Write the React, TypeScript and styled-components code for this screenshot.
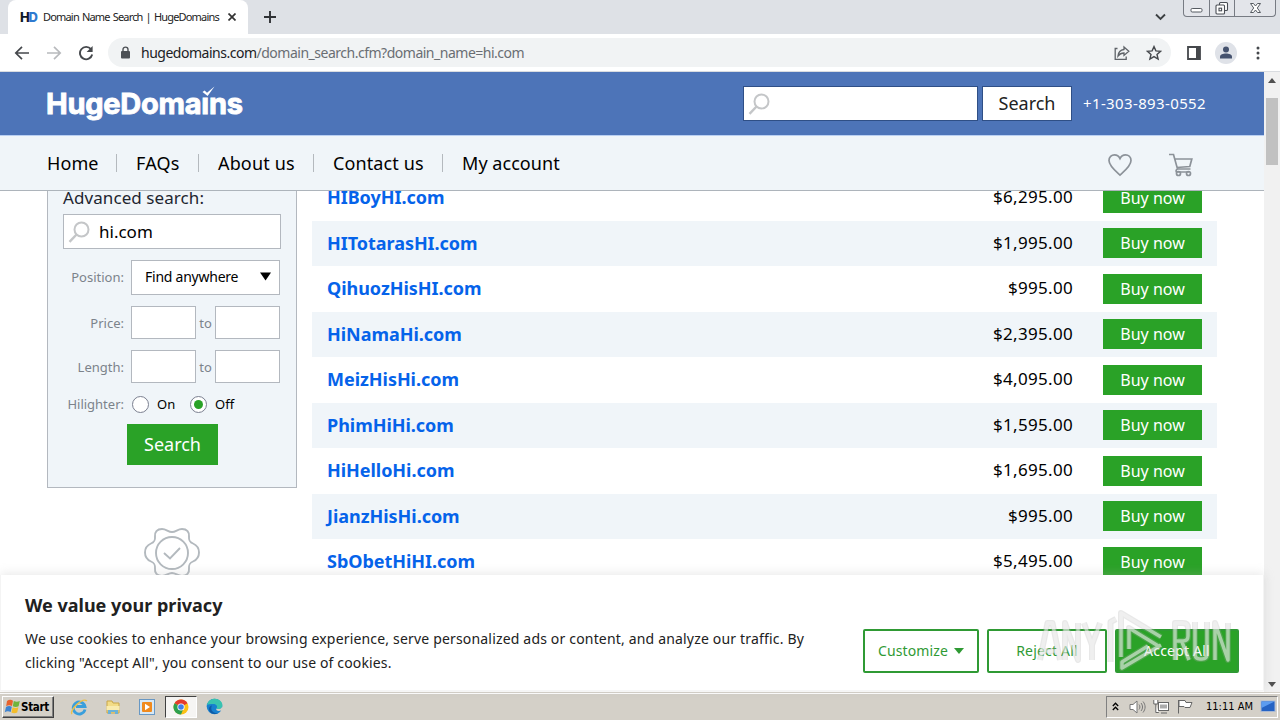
import React from "react";
import styled, { createGlobalStyle } from "styled-components";

const Global = createGlobalStyle`
  * { box-sizing: border-box; }
  body { margin: 0; overflow: hidden; font-family: "Noto Sans", "Open Sans", sans-serif; color: #000; }
  button, input { font-family: inherit; }
`;

const Screen = styled.div`
  width: 1280px; height: 720px; display: flex; flex-direction: column;
  overflow: hidden; background: #fff; position: relative;
`;

const Label = styled.span<{ $size: number; $track?: number; $color?: string; $weight?: number }>`
  font-size: ${p => p.$size}px;
  letter-spacing: ${p => p.$track ?? 0}px;
  color: ${p => p.$color ?? "inherit"};
  font-weight: ${p => p.$weight ?? 400};
  white-space: nowrap;
`;

/* Browser chrome */
const TabStrip = styled.div`
  height: 34px; background: #dee1e6; display: flex; align-items: flex-start; flex: none;
`;
const Tab = styled.div`
  margin-left: 8px; width: 240px; height: 34px; background: #fff; border-radius: 8px 8px 0 0;
  display: flex; align-items: center; padding: 0 12px 0 12px; flex: none;
`;
const Favicon = styled.span`
  width: 23px; font: 800 13px/14px "Inter", sans-serif; letter-spacing: -1.2px; color: #10182a;
  b { color: #2f7ad0; font-weight: 800; }
`;
const TabTitle = styled.div`flex: 1; min-width: 0; line-height: 16px; display: flex; word-spacing: 1px;`;
const NewTab = styled.div`width: 12px; margin: 11px 0 0 16px; height: 12px; display: flex;`;
const StripEnd = styled.div`margin-left: auto; display: flex; align-items: flex-start;`;
const Chevron = styled.div`margin: 13px 17px 0 0; display: flex;`;
const WindowButtons = styled.div`
  display: flex; width: 93px; height: 17px; margin-right: 4px; border: 1px solid #777b83; border-top: 0;
  border-radius: 0 0 4px 4px; background: #e3e5ea;
`;
const WindowButton = styled.div<{ $w: number }>`
  width: ${p => p.$w}px; display: flex; align-items: center; justify-content: center;
  & + & { border-left: 1px solid #777b83; }
`;
const Toolbar = styled.div`
  height: 38px; border-bottom: 1px solid #d9dce0; display: flex; align-items: center; flex: none;
  padding: 0 12px 0 14px; background: #fff;
`;
const NavIcons = styled.div`display: flex; gap: 16px; width: 94px;`;
const Omnibox = styled.div`
  height: 29px; width: 1063px; border-radius: 15px; background: #f1f3f4; display: flex; align-items: center;
  padding: 0 9px 0 12px; line-height: 20px;
`;
const UrlText = styled.div`margin-left: 10px; flex: 1; display: flex;`;
const OmniIcons = styled.div`display: flex; gap: 16px; align-items: center;`;
const ToolbarEnd = styled.div`display: flex; align-items: center; margin-left: auto; gap: 14px;`;
const MoreDots = styled.svg`margin-left: -5px;`;

/* Page viewport */
const Viewport = styled.div`flex: 1; display: flex; min-height: 0; position: relative;`;
const Page = styled.div`width: 1264px; display: flex; flex-direction: column; overflow: hidden;`;
const ScrollBar = styled.div`
  width: 16px; background: #f1f1f1; display: flex; flex-direction: column; align-items: center;
  justify-content: space-between; padding: 6px 0 5px;
`;
const ScrollTrack = styled.div`flex: 1; width: 12px; padding-top: 15px;`;
const Thumb = styled.div`height: 67px; background: #c1c1c1;`;
const TopBar = styled.header`
  height: 64px; background: #4d74b8; border-bottom: 1px solid #b9cff2; flex: none;
  display: flex; align-items: center; padding: 0 57px 0 46px;
`;
const Logo = styled.div`
  position: relative; font: 700 29px/32px "Inter", sans-serif; letter-spacing: -0.25px; color: #fff;
  -webkit-text-stroke: 0.9px #fff; display: flex; padding-top: 1px;
`;
const LogoTick = styled.svg`position: absolute; left: 155px; top: -1px;`;
const TopSearch = styled.div`margin-left: auto; display: flex; gap: 4px; align-items: center; color: #fff;`;
const SearchField = styled.div`
  width: 235px; height: 35px; background: #fff; border: 1px solid #2f4f86; display: flex; align-items: center; padding-left: 4px;
`;
const SearchButton = styled.button`
  width: 90px; height: 35px; padding: 0 0 1px; background: #fff; border: 1px solid #2f4f86; color: #222;
`;
const Phone = styled.div`width: 124px; margin-left: 7px; padding-bottom: 1px; display: flex;`;
const MenuBar = styled.nav`
  height: 55px; background: #f0f5f9; border-bottom: 1px solid #adb4bb; flex: none;
  display: flex; align-items: center; padding: 0 70px 0 47px;
`;
const MenuItem = styled.div<{ $w: number }>`
  width: ${p => p.$w}px; display: flex; align-items: center; height: 18px; line-height: 18px;
  & + & { border-left: 1px solid #b4b9be; padding-left: 19px; }
`;
const MenuIcons = styled.div`margin-left: auto; display: flex; gap: 34px; align-items: center; padding-top: 4px;`;
const Content = styled.main`flex: 1; min-height: 0; overflow: hidden; display: flex; padding-left: 47px; gap: 15px;`;
const Aside = styled.aside`width: 250px; display: flex; flex-direction: column; align-items: center;`;
const Panel = styled.div`
  width: 250px; height: 297px; flex: none; background: #f0f5f9; border: 1px solid #b3b8bf; border-top: 0;
  padding: 0 16px 0 15px; display: flex; flex-direction: column;
`;
const PanelTitle = styled.div`height: 23px; line-height: 14px; color: #1d2530;`;
const QueryField = styled.div`
  height: 35px; width: 218px; background: #fff; border: 1px solid #b3b8bf; display: flex; align-items: center;
  padding-left: 4px; gap: 9px; margin-bottom: 11px; flex: none;
`;
const FormRow = styled.div<{ $h: number; $gap: number }>`
  height: ${p => p.$h}px; margin-bottom: ${p => p.$gap}px; display: flex; align-items: center; flex: none;
`;
const FieldName = styled.div<{ $lift?: number }>`
  width: 61px; margin-right: 7px; padding-bottom: ${p => p.$lift ?? 0}px; text-align: right; line-height: 18px;
`;
const Select = styled.div`
  width: 149px; height: 35px; background: #fff; border: 1px solid #b3b8bf; display: flex; align-items: center;
  justify-content: space-between; padding: 0 8px 2px 13px;
`;
const Box = styled.div`width: 65px; height: 33px; background: #fff; border: 1px solid #b3b8bf;`;
const Between = styled.div`width: 19px; padding-bottom: 2px; text-align: center;`;
const Radio = styled.span<{ $on?: boolean }>`
  width: 17px; height: 17px; border-radius: 50%; border: 1px solid #7b8090; background: #fff; margin: 0 8px 0 1px;
  display: flex; align-items: center; justify-content: center;
  &::after { content: ""; width: 9px; height: 9px; border-radius: 50%; background: ${p => (p.$on ? "#2aa227" : "transparent")}; }
`;
const RadioText = styled.div`width: 32px; display: flex;`;
const PanelButton = styled.button`
  width: 91px; height: 41px; margin-left: 64px; padding: 0 0 2px; border: 0; background: #2aa227; color: #fff;
`;
const Seal = styled.svg`margin-top: 40px; flex: none;`;
const Results = styled.div`width: 905px; margin-top: -15.8px; display: flex; flex-direction: column;`;
const Result = styled.div<{ $shade: boolean }>`
  height: 45.5px; flex: none; display: flex; align-items: center; padding: 0 15px;
  background: ${p => (p.$shade ? "#f0f5f9" : "#fff")};
`;
const DomainName = styled.div`display: flex; padding-bottom: 1.4px;`;
const Price = styled.div`margin-left: auto; margin-right: 30px; padding-bottom: 2.4px; display: flex;`;
const BuyButton = styled.button`
  width: 99px; height: 30px; padding: 0; border: 0; background: #2aa227; color: #fff; line-height: 30px;
`;

/* Cookie banner */
const Banner = styled.div`
  position: absolute; left: 0; bottom: 1px; width: 1264px; height: 116px; background: #fff;
  border: 1px solid #f4f4f4; border-top: 0; box-shadow: 0 -1px 10px rgba(172, 171, 171, 0.3);
  display: flex; align-items: flex-start; padding: 18px 24px; justify-content: space-between;
`;
const BannerText = styled.div`line-height: 24px; display: flex; flex-direction: column; color: #212121;`;
const BannerTitle = styled.div`height: 34px; line-height: 24px;`;
const BannerActions = styled.div`display: flex; gap: 8px; margin-top: 36px;`;
const Action = styled.button<{ $w: number; $solid?: boolean }>`
  width: ${p => p.$w}px; height: 44px; padding: 0 0 1px; border: 2px solid #2f9a34; border-radius: 2px;
  background: ${p => (p.$solid ? "#2aa227" : "transparent")}; color: ${p => (p.$solid ? "#fff" : "#2f9a34")};
  display: flex; align-items: center; justify-content: center; gap: 6px;
`;
const Watermark = styled.svg`position: absolute; left: 1030px; top: 605px; pointer-events: none;`;

/* Taskbar */
const TaskBar = styled.div`
  height: 28px; background: #d4d0c8; border-top: 1px solid #d4d0c8; box-shadow: inset 0 1px 0 #fff;
  display: flex; align-items: center; padding: 0 2px; flex: none; font-family: "DejaVu Sans Condensed", "DejaVu Sans", sans-serif;
`;
const StartButton = styled.div`
  width: 52px; height: 22px; border: 1px solid; border-color: #fff #404040 #404040 #fff; box-shadow: inset -1px -1px 0 #808080;
  display: flex; align-items: center; gap: 0; padding-left: 1px;
`;
const Launchers = styled.div`display: flex; align-items: center; margin-left: 8px;`;
const Launcher = styled.div<{ $active?: boolean }>`
  width: 34px; height: 22px; display: flex; align-items: center; justify-content: center;
  ${p => p.$active && "width: 32px; margin-left: 1px; background: #f6f5f3; border: 1px solid; border-color: #404040 #fff #fff #404040;"}
`;
const Tray = styled.div`
  margin-left: auto; width: 172px; height: 22px; border: 1px solid; border-color: #808080 #fff #fff #808080;
  display: flex; align-items: center; padding-left: 5px;
`;
const TrayIcon = styled.div<{ $w: number }>`width: ${p => p.$w}px; display: flex; align-items: center;`;
const Clock = styled.div`width: 54px; display: flex;`;

const Magnifier = () => (
  <svg width="22" height="22" viewBox="0 0 22 22" fill="none" stroke="#c4c6c8" strokeWidth="2">
    <circle cx="13.5" cy="8.5" r="7" /><path d="M8.5 13.5 1.5 20.8" strokeWidth="2.4" />
  </svg>
);

const menu: [string, number, number][] = [
  ["Home", 69, 0.1], ["FAQs", 82, 0.15], ["About us", 115, 0.15], ["Contact us", 129, 0.12], ["My account", 130, 0.05],
];

const results: [string, string][] = [
  ["HIBoyHI.com", "$6,295.00"], ["HITotarasHI.com", "$1,995.00"], ["QihuozHisHI.com", "$995.00"],
  ["HiNamaHi.com", "$2,395.00"], ["MeizHisHi.com", "$4,095.00"], ["PhimHiHi.com", "$1,595.00"],
  ["HiHelloHi.com", "$1,695.00"], ["JianzHisHi.com", "$995.00"], ["SbObetHiHI.com", "$5,495.00"],
];

const BrowserTabs = () => (
  <TabStrip>
    <Tab>
      <Favicon>H<b>D</b></Favicon>
      <TabTitle><Label $size={11} $track={-0.82} $color="#222">Domain Name Search | HugeDomains</Label></TabTitle>
      <svg width="8" height="8" viewBox="0 0 8 8" stroke="#333" strokeWidth="1.7"><path d="M.5.5l7 7M7.5.5l-7 7" /></svg>
    </Tab>
    <NewTab><svg width="12" height="12" viewBox="0 0 12 12" stroke="#303236" strokeWidth="1.9"><path d="M6 0v12M0 6h12" /></svg></NewTab>
    <StripEnd>
      <Chevron><svg width="11" height="8" viewBox="0 0 11 8" fill="none" stroke="#3c4043" strokeWidth="1.9"><path d="M1 1.5 5.5 6 10 1.5" /></svg></Chevron>
      <WindowButtons>
        <WindowButton $w={25}><svg width="13" height="16" fill="#fff" stroke="#555a61"><rect x="1" y="8.5" width="11" height="3.5" rx="1.2" /></svg></WindowButton>
        <WindowButton $w={25}><svg width="14" height="16" fill="#fff" stroke="#4a4e55" strokeWidth="1.1"><rect x="4.5" y="2.5" width="8" height="8" rx="1" /><rect x="1" y="5" width="8.5" height="9" rx="1" /><rect x="4" y="8.2" width="2.6" height="2.6" /></svg></WindowButton>
        <WindowButton $w={41}><svg width="13" height="16" fill="#fff" stroke="#555a61"><path d="M1.5 3.5h3l2 2.5 2-2.5h3L8.3 8l3.200 4.500h-3l-2-2.500-2 2.500h-3L4.700 8z" /></svg></WindowButton>
      </WindowButtons>
    </StripEnd>
  </TabStrip>
);

const BrowserToolbar = () => (
  <Toolbar>
    <NavIcons>
      <svg width="16" height="16" viewBox="0 0 16 16" fill="none" stroke="#45484c" strokeWidth="1.7"><path d="M15 8H2M8 1.8 1.8 8 8 14.2" /></svg>
      <svg width="16" height="16" viewBox="0 0 16 16" fill="none" stroke="#b8babd" strokeWidth="1.7"><path d="M1 8h13M8 1.8 14.2 8 8 14.2" /></svg>
      <svg width="16" height="16" viewBox="0 0 16 16" fill="none" stroke="#45484c" strokeWidth="1.9"><path d="M13 4.2A6.2 6.2 0 1 0 14.2 9.6" /><path d="M14.6 1v6H8.6z" fill="#45484c" stroke="none" /></svg>
    </NavIcons>
    <Omnibox>
      <svg width="11" height="13" viewBox="0 0 11 13"><rect x="1" y="5" width="9" height="7.5" rx="1" fill="#4d5156" /><path d="M3 5.5V3.6a2.5 2.5 0 0 1 5 0v1.9" fill="none" stroke="#4d5156" strokeWidth="1.4" /></svg>
      <UrlText>
        <Label $size={14} $track={-0.49} $color="#202124">hugedomains.com</Label>
        <Label $size={14} $track={-0.49} $color="#6a6e73">/domain_search.cfm?domain_name=hi.com</Label>
      </UrlText>
      <OmniIcons>
        <svg width="16" height="16" viewBox="0 0 16 16" fill="none" stroke="#5f6368" strokeWidth="1.3"><path d="M3.5 3.5H1.2v10.8h11V11.5" /><path d="M10 2l4.8 4.2L10 10.4V8C7.200 8 5.500 9 4 11c.3-3.500 2.300-6 6-6.500z" /></svg>
        <svg width="16" height="16" viewBox="0 0 16 16" fill="none" stroke="#45484c" strokeWidth="1.4"><path d="M8 1.600l1.900 4.300 4.700.4-3.600 3.100 1.100 4.600L8 11.600 3.900 14 5 9.400 1.400 6.300l4.700-.4z" /></svg>
      </OmniIcons>
    </Omnibox>
    <ToolbarEnd>
      <svg width="14" height="14"><path d="M1 1h12v12H1z" fill="none" stroke="#45484c" strokeWidth="1.8" /><path d="M9 1h4v12H9z" fill="#45484c" /></svg>
      <svg width="22" height="22"><circle cx="11" cy="11" r="11" fill="#dfe2e8" /><circle cx="11" cy="7.600" r="3" fill="#45526e" /><path d="M5 16.500v-1.700c0-2 3-3.200 6-3.200s6 1.200 6 3.200v1.700z" fill="#45526e" /></svg>
      <MoreDots width="22" height="14" fill="#45484c"><circle cx="12" cy="2" r="1.500" /><circle cx="12" cy="7" r="1.500" /><circle cx="12" cy="12" r="1.500" /></MoreDots>
    </ToolbarEnd>
  </Toolbar>
);

const SiteHeader = () => (
  <>
    <TopBar>
      <Logo>
        HugeDomaıns
        <LogoTick width="15" height="11" viewBox="0 0 15 11"><path d="M1.500 6 3.600 4.600 6 6.800 13.500.6 6.600 10z" fill="#fff" /></LogoTick>
      </Logo>
      <TopSearch>
        <SearchField><Magnifier /></SearchField>
        <SearchButton><Label $size={18}>Search</Label></SearchButton>
        <Phone><Label $size={15} $track={0.37}>+1-303-893-0552</Label></Phone>
      </TopSearch>
    </TopBar>
    <MenuBar>
      {menu.map(([name, w, t]) => <MenuItem key={name} $w={w}><Label $size={18} $track={t}>{name}</Label></MenuItem>)}
      <MenuIcons>
        <svg width="26" height="24" viewBox="0 0 26 24" fill="none" stroke="#8c9299" strokeWidth="1.700"><path d="M13 22C9 18.500 2 13 2 7.500 2 4 4.500 1.800 7.500 1.800c2.500 0 4.500 1.700 5.500 3.700 1-2 3-3.700 5.500-3.700C21.500 1.800 24 4 24 7.500 24 13 17 18.500 13 22z" /></svg>
        <svg width="27" height="24" viewBox="0 0 27 24" fill="none" stroke="#8c9299" strokeWidth="1.700"><path d="M2 1.500h4.500l4 14.500h13M7.800 6h17l-2 7.500-13 1M10.500 16c-2 1-2 3 0 3h12" /><circle cx="11.500" cy="20.500" r="2" /><circle cx="21.500" cy="20.500" r="2" /></svg>
      </MenuIcons>
    </MenuBar>
  </>
);

const SearchPanel = () => (
  <Panel>
    <PanelTitle><Label $size={17} $track={0.08}>Advanced search:</Label></PanelTitle>
    <QueryField><Magnifier /><Label $size={17}>hi.com</Label></QueryField>
    <FormRow $h={35} $gap={11}>
      <FieldName $lift={2}><Label $size={13} $color="#7c838b">Position:</Label></FieldName>
      <Select><Label $size={14} $track={-0.24}>Find anywhere</Label><svg width="11" height="9"><path d="M0 .5h11L5.500 8.500z" /></svg></Select>
    </FormRow>
    {["Price:", "Length:"].map((name, i) => (
      <FormRow key={name} $h={33} $gap={i ? 10 : 11}>
        <FieldName><Label $size={13} $color="#7c838b">{name}</Label></FieldName>
        <Box /><Between><Label $size={13} $color="#7c838b">to</Label></Between><Box />
      </FormRow>
    ))}
    <FormRow $h={22} $gap={9}>
      <FieldName $lift={2}><Label $size={13} $color="#7c838b">Hilighter:</Label></FieldName>
      <Radio /><RadioText><Label $size={13}>On</Label></RadioText>
      <Radio $on /><Label $size={13}>Off</Label>
    </FormRow>
    <PanelButton><Label $size={18}>Search</Label></PanelButton>
  </Panel>
);

const SealIcon = () => (
  <Seal width="56" height="60" viewBox="0 0 56 60" fill="none" stroke="#b3b9be" strokeWidth="1.900">
    <path d="M28 4c4 0 5.500-3 10-3 5 0 7.500 3 7 7.500-.3 4 .5 5.500 4 7 3.500 1.500 6 4.500 6 9s-2.500 7.500-6 9c-3.500 1.500-4.300 3-4 7 .5 4.500-2 7.500-7 7.500-4.500 0-6-3-10-3s-5.500 3-10 3c-5 0-7.500-3-7-7.500.3-4-.5-5.500-4-7-3.500-1.500-6-4.500-6-9s2.500-7.500 6-9c3.500-1.500 4.300-3 4-7C10.500 4 13 1 18 1c4.500 0 6 3 10 3z" />
    <circle cx="28" cy="25" r="16" /><path d="M20 25l6 5.500L36 20" />
  </Seal>
);

const CookieBanner = () => (
  <Banner>
    <BannerText>
      <BannerTitle><Label $size={18} $weight={700}>We value your privacy</Label></BannerTitle>
      <Label $size={14} $track={0.175}>We use cookies to enhance your browsing experience, serve personalized ads or content, and analyze our traffic. By</Label>
      <Label $size={14} $track={0.14}>clicking "Accept All", you consent to our use of cookies.</Label>
    </BannerText>
    <BannerActions>
      <Action $w={116}><Label $size={14} $track={0.1}>Customize</Label><svg width="10" height="6"><path d="M0 0h10L5 6z" fill="#2f9a34" /></svg></Action>
      <Action $w={120}><Label $size={14} $track={0.2}>Reject All</Label></Action>
      <Action $w={124} $solid><Label $size={14} $track={0.2}>Accept All</Label></Action>
    </BannerActions>
  </Banner>
);

const WindowsFlag = () => (
  <svg width="17" height="17" viewBox="0 0 17 17">
    <path d="M3 3c2-1.500 4-1.500 6-.3L8 8c-2-1-4-1-5.800.2z" fill="#e8622c" /><path d="M9.800 3c2 1 4 1 6 0L14.600 8.200c-2 1-4 1-5.800 0z" fill="#6fb43c" />
    <path d="M2 9c2-1.200 4-1.200 5.800-.2L6.700 14c-2-1-4-1-5.900.2z" fill="#3e83d0" /><path d="M8.600 9.200c2 1 3.800 1 5.800 0L13.200 14.400c-2 1-4 1-5.800 0z" fill="#f3bd2c" />
  </svg>
);

const Taskbar = () => (
  <TaskBar>
    <StartButton><WindowsFlag /><Label $size={11.5} $weight={700} $track={-0.3}>Start</Label></StartButton>
    <Launchers>
      <Launcher><svg width="18" height="18" viewBox="0 0 18 18" fill="none"><path d="M15 11.500A6 6 0 1 1 15 8.500H6" stroke="#3a9fdc" strokeWidth="2.800" /><path d="M2 16C-1 13 12-1 17 3" stroke="#ecc04a" strokeWidth="1.400" /></svg></Launcher>
      <Launcher><svg width="16" height="16"><path d="M2 2h5l1 2h6v10H2z" fill="#f3dc86" stroke="#c9a649" /><path d="M1.500 7h13v4h-13z" fill="#f9ebae" /><path d="M3 15v-4h10v4h-3v-2H6v2z" fill="#6cb2d8" /></svg></Launcher>
      <Launcher><svg width="16" height="16"><rect x=".5" y=".5" width="15" height="15" fill="#d7e8f5" stroke="#6898c4" /><rect x="3" y="3" width="10" height="10" rx="1" fill="#f08a1d" /><path d="M6 4.800v6.400L11 8z" fill="#fff" /></svg></Launcher>
      <Launcher $active><svg width="16" height="16" viewBox="0 0 16 16"><circle cx="8" cy="8" r="7.500" fill="#fbc116" /><path d="M8 8 1.500 4.200A7.500 7.500 0 0 1 14.500 4.200z" fill="#e33b2e" /><path d="M1.500 4.200A7.500 7.500 0 0 0 8 15.500L10.500 9.500 8 8z" fill="#2da04e" /><circle cx="8" cy="8" r="3.600" fill="#fff" /><circle cx="8" cy="8" r="2.800" fill="#3f7fe8" /></svg></Launcher>
      <Launcher><svg width="17" height="17" viewBox="0 0 17 17"><circle cx="8.500" cy="8.500" r="7.800" fill="#1780cf" /><path d="M1 7C2 2 6 .7 9 .7c5 0 8 4 7.300 7.500-.7 3-4.300 3.500-5.800 2.300 1.500-2 0-4.500-3-4.500-3 0-5.500 0-6.500 1z" fill="#39c3b0" /><path d="M6 7.500c-2 3.500 0 8 6 7.500-5 2.500-9-.5-9-4 0-2 1.500-3.500 3-3.500z" fill="#0e5aa5" /><path d="M10.500 10.500c1.500 1.200 5 .7 5.800-2.300L17 12l-4 1c-2 0-3.500-1-2.500-2.500z" fill="#d4d0c8" /></svg></Launcher>
    </Launchers>
    <Tray>
      <TrayIcon $w={17}><svg width="7" height="9" fill="none" stroke="#000" strokeWidth="1.300"><path d="M.8 4 3.500 1.200 6.200 4M.8 8 3.500 5.200 6.200 8" /></svg></TrayIcon>
      <TrayIcon $w={24}><svg width="17" height="14" fill="#fff" stroke="#777"><path d="M1 4.500h3l4-3.500v12L4 9.500H1z" /><path d="M10 4.500c1.200 1.500 1.200 3.500 0 5M12 3c2 2.500 2 5.500 0 8M14 1.500c2.800 3.500 2.800 7.500 0 11" fill="none" /></svg></TrayIcon>
      <TrayIcon $w={24}><svg width="17" height="15" fill="#fff" stroke="#666"><rect x="5.500" y="3.500" width="10" height="8" /><path d="M7 5.500h7v4H7z" fill="#aaa" stroke="none" /><path d="M8 14h6M.8 1v4h4V1M2.800 5v8.500h3" /></svg></TrayIcon>
      <TrayIcon $w={29}><svg width="17" height="15" fill="#fff" stroke="#666"><path d="M1.500 1v13.500M2 1.500h6l1 2h6l-2 5H8L7 7.500H2z" /></svg></TrayIcon>
      <Clock><Label $size={11}>11:11 AM</Label></Clock>
      <svg width="16" height="13"><rect x="1" y="1" width="14" height="10.500" fill="#2563c4" stroke="#a9b9d4" /><path d="M1.500 1.500h13L1.500 8z" fill="#5c9cf0" /></svg>
    </Tray>
  </TaskBar>
);

const MarkStrokes = () => (
  <>
    <path d="M10 55 17.500 18h5L30 55M13 46h14M35 55V18l13 37V18M54 18l8 22 8-22M62 40v15" />
    <path d="M86 14 80.500 17v40M91 52V8L131 32M99 44V23L130 42M131 40 92 63v-6L118 41" />
    <path d="M145 55V18h8q5 0 5 5v8q0 5-5 5h-8M152 37l7 18M165 17v32q0 5 5 5h2q5 0 5-5V17M185 55V18l13 37V18" />
  </>
);

const AnyRunMark = () => (
  <Watermark width="205" height="72" viewBox="0 0 205 72" fill="none" strokeLinejoin="round">
    <g stroke="#aaa" strokeWidth="6" opacity=".26"><MarkStrokes /></g>
    <g stroke="#f6f6f6" strokeWidth="3.500" opacity=".55"><MarkStrokes /></g>
  </Watermark>
);

export default function App() {
  return (
    <Screen>
      <Global />
      <BrowserTabs />
      <BrowserToolbar />
      <Viewport>
        <Page>
          <SiteHeader />
          <Content>
            <Aside><SearchPanel /><SealIcon /></Aside>
            <Results>
              {results.map(([name, price], i) => (
                <Result key={name} $shade={i % 2 === 1}>
                  <DomainName><Label $size={18} $weight={700} $track={-0.04} $color="#0563ea">{name}</Label></DomainName>
                  <Price><Label $size={17} $track={0.31}>{price}</Label></Price>
                  <BuyButton><Label $size={16}>Buy now</Label></BuyButton>
                </Result>
              ))}
            </Results>
          </Content>
        </Page>
        <ScrollBar>
          <svg width="8" height="5"><path d="M0 5 4 0l4 5z" fill="#505050" /></svg>
          <ScrollTrack><Thumb /></ScrollTrack>
          <svg width="8" height="5"><path d="M0 0h8L4 5z" fill="#505050" /></svg>
        </ScrollBar>
        <CookieBanner />
      </Viewport>
      <Taskbar />
      <AnyRunMark />
    </Screen>
  );
}
